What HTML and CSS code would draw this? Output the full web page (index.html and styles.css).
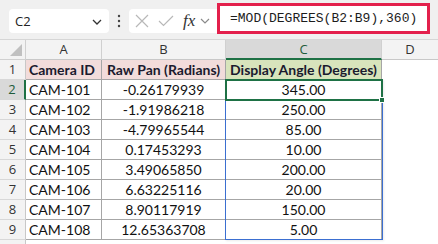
FILE: index.html
```html
<!DOCTYPE html>
<html>
<head>
<meta charset="utf-8">
<link rel="stylesheet" href="styles.css">
</head>
<body>
<div class="app">
  <div class="topbar">
    <div class="namebox">
      <span class="nb-text">C2</span>
      <svg class="nb-chev" width="10" height="6" viewBox="0 0 10 6"><path d="M1 1 L5 5 L9 1" fill="none" stroke="#333" stroke-width="1.3"/></svg>
    </div>
    <svg class="dots" width="4" height="14" viewBox="0 0 4 14"><circle cx="2" cy="2" r="1.2" fill="#444"/><circle cx="2" cy="7" r="1.2" fill="#444"/><circle cx="2" cy="12" r="1.2" fill="#444"/></svg>
    <div class="fxbox">
      <svg class="ico-x" width="14" height="14" viewBox="0 0 14 14"><path d="M1 1 L13 13 M13 1 L1 13" fill="none" stroke="#b8b8b8" stroke-width="1.2"/></svg>
      <svg class="ico-check" width="16" height="12" viewBox="0 0 16 12"><path d="M1 6 L5.5 10.5 L15 1" fill="none" stroke="#b8b8b8" stroke-width="1.2"/></svg>
      <span class="fx">fx</span>
      <svg class="fx-chev" width="10" height="6" viewBox="0 0 10 6"><path d="M1 1 L5 5 L9 1" fill="none" stroke="#8a8a8a" stroke-width="1.2"/></svg>
    </div>
    <div class="formula">=MOD(DEGREES(B2:B9),360)</div>
  </div>

  <div class="sheet">
    <div class="corner"><span class="tri"></span></div>
    <div class="colh">A</div>
    <div class="colh">B</div>
    <div class="colh sel">C</div>
    <div class="colh last">D</div>

    <div class="rowh">1</div>
    <div class="c hdr pink">Camera ID</div>
    <div class="c hdr pink ctr">Raw Pan (Radians)</div>
    <div class="c hdr green ctr">Display Angle (Degrees)</div>
    <div class="e"></div>

    <div class="rowh sel">2</div>
    <div class="c">CAM-101</div>
    <div class="c ctr">-0.26179939</div>
    <div class="c ctr">345.00</div>
    <div class="e"></div>

    <div class="rowh">3</div>
    <div class="c">CAM-102</div>
    <div class="c ctr">-1.91986218</div>
    <div class="c ctr">250.00</div>
    <div class="e"></div>

    <div class="rowh">4</div>
    <div class="c">CAM-103</div>
    <div class="c ctr">-4.79965544</div>
    <div class="c ctr">85.00</div>
    <div class="e"></div>

    <div class="rowh">5</div>
    <div class="c">CAM-104</div>
    <div class="c ctr">0.17453293</div>
    <div class="c ctr">10.00</div>
    <div class="e"></div>

    <div class="rowh">6</div>
    <div class="c">CAM-105</div>
    <div class="c ctr">3.49065850</div>
    <div class="c ctr">200.00</div>
    <div class="e"></div>

    <div class="rowh">7</div>
    <div class="c">CAM-106</div>
    <div class="c ctr">6.63225116</div>
    <div class="c ctr">20.00</div>
    <div class="e"></div>

    <div class="rowh">8</div>
    <div class="c">CAM-107</div>
    <div class="c ctr">8.90117919</div>
    <div class="c ctr">150.00</div>
    <div class="e"></div>

    <div class="rowh">9</div>
    <div class="c">CAM-108</div>
    <div class="c ctr">12.65363708</div>
    <div class="c ctr">5.00</div>
    <div class="e"></div>

    <div class="rowh"></div>
    <div class="e"></div>
    <div class="e"></div>
    <div class="e"></div>
    <div class="e"></div>

    <div class="range"></div>
    <div class="active"></div>
    <div class="handle"></div>
  </div>
</div>
</body>
</html>
```

FILE: styles.css
```css
* { box-sizing: border-box; }
html, body { margin: 0; padding: 0; background: #fff; }
body { width: 438px; height: 244px; overflow: hidden; font-family: "Lato", "Liberation Sans", sans-serif; }

.app { width: 438px; height: 244px; overflow: hidden; }

.topbar {
  height: 40px;
  background: #f0f0f0;
  border-bottom: 1px solid #d6d6d6;
  display: flex;
  align-items: flex-start;
  position: relative;
}
.namebox {
  margin: 9px 0 0 9px;
  width: 100px;
  height: 24px;
  background: #fff;
  border-radius: 4px;
  display: flex;
  align-items: center;
  justify-content: space-between;
  padding: 0 7px 0 6px;
}
.nb-text { font-family: "Open Sans", "Noto Sans", sans-serif; font-size: 13px; color: #222; }
.nb-chev { margin-top: 1px; }
.dots { margin: 14px 0 0 8px; }
.fxbox {
  margin: 9px 0 0 8px;
  width: 92px;
  height: 24px;
  background: #fff;
  border-radius: 4px 0 0 4px;
  display: flex;
  align-items: center;
  padding-left: 6px;
}
.ico-check { margin-left: 9px; }
.fx {
  margin-left: 9px;
  font-family: "Liberation Serif", serif;
  font-style: italic;
  font-size: 17px;
  color: #333;
  line-height: 24px;
}
.fx-chev { margin-left: 5px; }
.formula {
  margin: 3px 0 0 -4px;
  width: 213px;
  height: 31px;
  background: #fff;
  border: 3px solid #e3204c;
  padding-left: 10px;
  font-family: "Liberation Mono", monospace;
  font-size: 13px;
  color: #1c1c1c;
  line-height: 25px;
  white-space: nowrap;
  position: relative;
  z-index: 2;
}

.sheet {
  position: relative;
  display: grid;
  grid-template-columns: 26px 76px 124px 156px 1fr;
  grid-auto-rows: 20px;
  font-size: 14px;
  color: #111;
}
.corner {
  background: #f3f3f3;
  border-right: 1px solid #d0d0d0;
  border-bottom: 1px solid #d0d0d0;
  position: relative;
}
.tri {
  position: absolute;
  right: 3px;
  bottom: 3px;
  width: 0; height: 0;
  border-left: 12px solid transparent;
  border-bottom: 12px solid #c0c0c0;
}
.colh {
  background: #f3f3f3;
  border-right: 1px solid #d0d0d0;
  border-bottom: 1px solid #c8c8c8;
  text-align: center;
  font-family: "Open Sans", "Noto Sans", sans-serif;
  font-size: 13px;
  line-height: 19px;
  color: #333;
}
.colh.sel { background: #d9d9d9; border-bottom: 2px solid #1e7145; color: #1e5c3a; }
.colh.last { border-right: none; }
.rowh {
  background: #f3f3f3;
  border-right: 1px solid #c8c8c8;
  border-bottom: 1px solid #d8d8d8;
  text-align: center;
  font-family: "Open Sans", "Noto Sans", sans-serif;
  font-size: 13px;
  line-height: 19px;
  color: #333;
}
.rowh.sel { background: #d9d9d9; border-right: 2px solid #1e7145; color: #1e5c3a; }
.c {
  border-right: 1px solid #a6a6a6;
  border-bottom: 1px solid #a6a6a6;
  padding: 0 3px;
  line-height: 20px;
  white-space: nowrap;
  overflow: hidden;
}
.c.ctr { text-align: center; }
.hdr { font-weight: bold; color: #1a1a2e; }
.pink { background: #f2dcdb; }
.green { background: #d8e4bc; }
.e { background: #fff; }

.range {
  position: absolute;
  left: 225px;
  top: 39px;
  width: 158px;
  height: 161px;
  border: 1px solid #3b6fd1;
  box-shadow: 1px 1px 2px rgba(0,0,0,0.08);
  pointer-events: none;
}
.active {
  position: absolute;
  left: 225px;
  top: 39px;
  width: 158px;
  height: 22px;
  border: 2px solid #1e7145;
}
.handle {
  position: absolute;
  left: 379px;
  top: 57px;
  width: 6px;
  height: 6px;
  background: #1e7145;
  border: 1px solid #fff;
}
```
